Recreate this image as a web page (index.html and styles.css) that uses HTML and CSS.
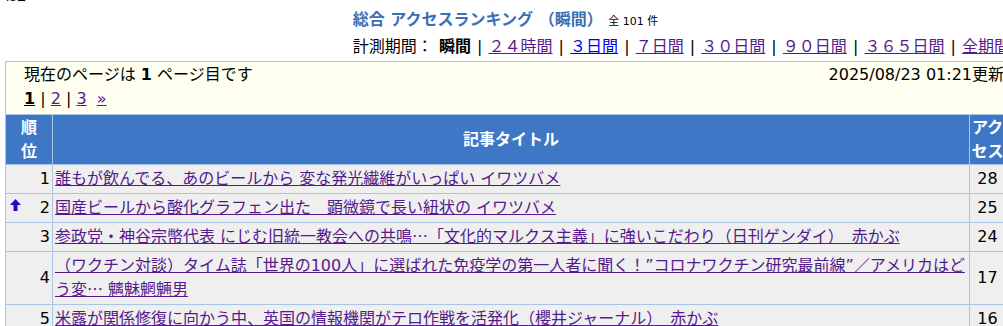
FILE: index.html
```html
<!DOCTYPE html>
<html lang="ja">
<head>
    <meta charset="UTF-8">
    <meta name="viewport" content="width=device-width, initial-scale=1.0">
    <title>総合 アクセスランキング（瞬間）</title>
    <link rel="stylesheet" href="styles.css">
</head>
<body>
    <div class="page">
        <div class="crumb">総合</div>
        <div class="heading">
            <h1 class="title">総合 アクセスランキング （瞬間） <span class="total">全 101 件</span></h1>
            <p class="periods">計測期間： <b>瞬間</b> | <a href="#" class="seen">２４時間</a> | <a href="#">３日間</a> | <a href="#" class="seen">７日間</a> | <a href="#" class="seen">３０日間</a> | <a href="#" class="seen">９０日間</a> | <a href="#" class="seen">３６５日間</a> | <a href="#" class="seen">全期間</a></p>
        </div>

        <table class="ranking">
            <colgroup>
                <col class="col-rank">
                <col class="col-title">
                <col class="col-count">
            </colgroup>
            <tr class="info">
                <td colspan="3">
                    <div class="info-top">
                        <span>現在のページは <b>1</b> ページ目です</span>
                        <span class="updated">2025/08/23 01:21更新</span>
                    </div>
                    <div class="pager"><b class="current">1</b> | <a href="#" class="seen">2</a> | <a href="#" class="seen">3</a> &nbsp;<a href="#" class="seen">&raquo;</a></div>
                </td>
            </tr>
            <tr class="head">
                <th>順<br>位</th>
                <th>記事タイトル</th>
                <th>アク<br>セス</th>
            </tr>
            <tr>
                <td class="rank">1</td>
                <td class="subject"><a href="#" class="seen">誰もが飲んでる、あのビールから 変な発光繊維がいっぱい イワツバメ</a></td>
                <td class="count">28</td>
            </tr>
            <tr>
                <td class="rank"><svg class="up" width="11" height="12" viewBox="0 0 11 12"><path d="M5.5 0 L11 6 L7.5 6 L7.5 12 L3.5 12 L3.5 6 L0 6 Z" fill="#3300cc"/></svg>2</td>
                <td class="subject"><a href="#" class="seen">国産ビールから酸化グラフェン出た　顕微鏡で長い紐状の イワツバメ</a></td>
                <td class="count">25</td>
            </tr>
            <tr>
                <td class="rank">3</td>
                <td class="subject"><a href="#" class="seen">参政党・神谷宗幣代表 にじむ旧統一教会への共鳴<span class="cj">…</span>「文化的マルクス主義」に強いこだわり（日刊ゲンダイ）　赤かぶ</a></td>
                <td class="count">24</td>
            </tr>
            <tr>
                <td class="rank">4</td>
                <td class="subject"><a href="#" class="seen">（ワクチン対談）タイム誌「世界の100人」に選ばれた免疫学の第一人者に聞く！”コロナワクチン研究最前線”／アメリカはどう変<span class="cj">…</span> 魑魅魍魎男</a></td>
                <td class="count">17</td>
            </tr>
            <tr>
                <td class="rank">5</td>
                <td class="subject"><a href="#" class="seen">米露が関係修復に向かう中、英国の情報機関がテロ作戦を活発化（櫻井ジャーナル）　赤かぶ</a></td>
                <td class="count">16</td>
            </tr>
        </table>
    </div>
</body>
</html>
```

FILE: styles.css
```css
body {
    margin: 0;
    padding: 0 0 0 5px;
    font-family: "DejaVu Sans", "Noto Sans CJK JP", sans-serif;
    font-size: 16px;
    line-height: 24px;
    color: #000;
    background: #fff;
}

a {
    color: #0000ee;
}

a.seen {
    color: #551a8b;
}

.page {
    width: 1001px;
}

.crumb {
    font-size: 11px;
    font-weight: bold;
    line-height: 14px;
    margin-top: -10px;
}

.heading {
    padding-top: 3px;
    text-align: center;
}

.title {
    margin: 0;
    font-size: 16px;
    line-height: 26px;
    color: #3a6fb8;
}

.total {
    font-size: 11px;
    font-weight: normal;
    color: #000;
}

.periods {
    margin: 0 -4px 2px 0;
    text-align: right;
    line-height: 24px;
    word-spacing: 1px;
}

.cj {
    font-family: "Noto Sans CJK JP", sans-serif;
}

.ranking {
    width: 1001px;
    table-layout: fixed;
    border-collapse: collapse;
}

.col-rank {
    width: 47px;
}

.col-count {
    width: 36px;
}

.ranking td,
.ranking th {
    border: 1px solid #a9c4e4;
    padding: 2px;
    line-height: 24px;
}

/* mixed latin/japanese fallback would otherwise grow each line */
.subject a {
    line-height: 0;
}

.info td {
    background: #fffff0;
    padding: 1px 1px 3px 18px;
}

.info-top {
    display: flex;
    justify-content: space-between;
}

.pager b {
    text-decoration: underline;
}

.head th {
    background: #3d77c5;
    color: #fff;
    font-weight: bold;
    padding: 1px 0 0;
    text-align: center;
}

.ranking tr:not(.info):not(.head) td {
    background: #efefef;
}

.rank {
    text-align: right;
    padding-right: 4px;
}

.up {
    float: left;
    margin: 3px 0 0 2px;
}

.subject {
    text-align: left;
}

.count {
    text-align: center;
}
```
